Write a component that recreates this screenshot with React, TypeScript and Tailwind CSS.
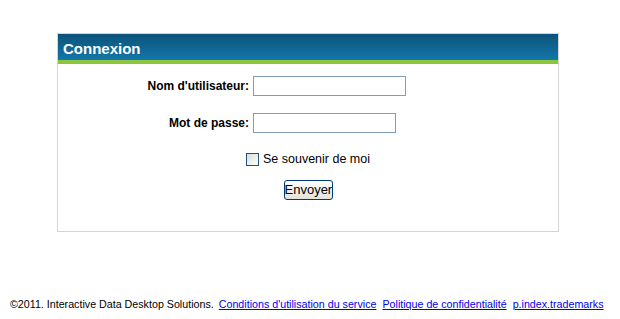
export default function App() {
  return (
    <div className="min-h-screen bg-white pt-[33px] text-[12px] text-black" style={{ fontFamily: '"Liberation Sans", Arial, sans-serif' }}>
      {/* Login panel */}
      <div className="ml-[57px] w-[502px] border border-[#d4d4d4]">
        <div className="h-[26px] bg-gradient-to-b from-[#0b5279] to-[#1378ab] pl-[5px] pt-[7px] text-[15px] font-bold leading-[16px] text-white">
          Connexion
        </div>
        <div className="h-[4px] bg-[#8cc63e]" />

        <div className="pb-[31px] pt-[12px]">
          <div className="flex items-center">
            <label className="w-[191px] text-right font-bold">Nom d'utilisateur:</label>
            <input type="text" className="ml-[4px] h-[20px] w-[153px] border border-[#7f9db9] bg-white" />
          </div>
          <div className="mt-[17px] flex items-center">
            <label className="w-[191px] text-right font-bold">Mot de passe:</label>
            <input type="password" className="ml-[4px] h-[20px] w-[143px] border border-[#7f9db9] bg-white" />
          </div>

          <div className="mt-[19px] flex items-center justify-center">
            <span className="h-[13px] w-[13px] border border-[#1c5180] bg-gradient-to-br from-[#dcdcd7] to-white" />
            <span className="ml-[4px] text-[12.5px] leading-[14px]">Se souvenir de moi</span>
          </div>

          <div className="mt-[14px] flex justify-center">
            <button className="h-[20px] w-[49px] rounded-[3px] border border-[#003c74] bg-gradient-to-b from-white to-[#e3e3db] text-[13px] leading-[16px]">
              Envoyer
            </button>
          </div>
        </div>
      </div>

      {/* Footer */}
      <div className="ml-[10px] mt-[65px] flex whitespace-nowrap text-[10.7px] leading-[14px]">
        <span>©2011. Interactive Data Desktop Solutions.</span>
        <a href="#" className="ml-[5px] text-[#0000ee] underline">Conditions d'utilisation du service</a>
        <a href="#" className="ml-[6px] text-[#0000ee] underline">Politique de confidentialité</a>
        <a href="#" className="ml-[6px] text-[#0000ee] underline">p.index.trademarks</a>
      </div>
    </div>
  );
}
